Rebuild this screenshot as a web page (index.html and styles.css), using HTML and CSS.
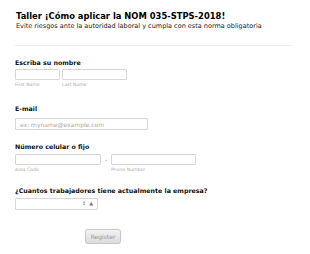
FILE: index.html
```html
<!DOCTYPE html>
<html>
<head>
<meta charset="utf-8">
<link rel="stylesheet" href="styles.css">
</head>
<body>
<div class="form">
  <div class="header">
    <h1 class="title">Taller ¡Cómo aplicar la NOM 035-STPS-2018!</h1>
    <div class="subtitle">Evite riesgos ante la autoridad laboral y cumpla con esta norma obligatoria</div>
  </div>
  <div class="field name">
    <label class="label">Escriba su nombre</label>
    <div class="row">
      <div class="sub"><div class="input w-first"></div><span class="sublabel">First Name</span></div>
      <div class="sub"><div class="input w-last"></div><span class="sublabel">Last Name</span></div>
    </div>
  </div>
  <div class="field email">
    <label class="label">E-mail</label>
    <div class="input w-email"><span class="ph">ex: myname@example.com</span></div>
  </div>
  <div class="field phone">
    <label class="label">Número celular o fijo</label>
    <div class="row">
      <div class="sub"><div class="input w-area"></div><span class="sublabel">Area Code</span></div>
      <span class="dash">-</span>
      <div class="sub"><div class="input w-phone"></div><span class="sublabel">Phone Number</span></div>
    </div>
  </div>
  <div class="field count">
    <label class="label">¿Cuantos trabajadores tiene actualmente la empresa?</label>
    <div class="input w-select"><span class="arrows"><span class="a1">⇕</span><span class="a2">▲</span></span></div>
  </div>
  <div class="actions">
    <button class="btn">Register</button>
  </div>
</div>
</body>
</html>
```
FILE: styles.css
```css
* { box-sizing: border-box; }
html, body { margin: 0; padding: 0; background: #fff; }
body { font-family: "DejaVu Sans", Verdana, sans-serif; color: #000; }
.form { padding: 11px 16px 0 15px; }
.header { border-bottom: 1px solid #eee; padding-bottom: 14px; margin-right: 1px; }
.title { margin: 0; font-size: 8.4px; font-weight: bold; line-height: 11px; padding-left: 1px; }
.subtitle { font-size: 6.5px; line-height: 9px; color: #222; padding-left: 1px; }
.field { display: flex; flex-direction: column; }
.label { font-size: 6.3px; font-weight: bold; line-height: 8px; color: #111; margin-bottom: 3px; }
.name { margin-top: 13px; }
.name .label { margin-bottom: 2px; }
.email { margin-top: 17px; }
.email .label { margin-bottom: 5px; }
.phone { margin-top: 13px; }
.count { margin-top: 14px; }
.row { display: flex; align-items: flex-start; }
.sub { display: flex; flex-direction: column; margin-right: 2px; }
.input { height: 11px; border: 1px solid #d6d6d6; border-radius: 1px; background: #fff; position: relative; display: flex; align-items: center; }
.w-first { width: 45px; }
.w-last { width: 65px; }
.w-email { width: 133px; height: 12px; }
.w-area { width: 86px; }
.w-phone { width: 85px; }
.w-select { width: 83px; height: 12px; }
.sublabel { font-size: 4.6px; color: #aaa; line-height: 6px; margin-top: 2px; }
.ph { font-size: 6px; color: #aaa; padding-left: 4px; }
.dash { font-size: 6px; color: #999; width: 6px; margin-right: 2px; text-align: center; line-height: 11px; }
.arrows { position: absolute; right: 4px; top: 1px; font-size: 5px; color: #777; display: flex; gap: 3px; }
.actions { padding-left: 70px; margin-top: 14px; }
.btn { width: 36px; height: 15px; border: 1px solid #c8c8c8; border-radius: 3px; background: linear-gradient(#f2f2f2, #dcdcdc); color: #999; font-family: "DejaVu Sans", Verdana, sans-serif; font-size: 6px; padding: 0; box-shadow: 0 0 1px #ccc; }
```
